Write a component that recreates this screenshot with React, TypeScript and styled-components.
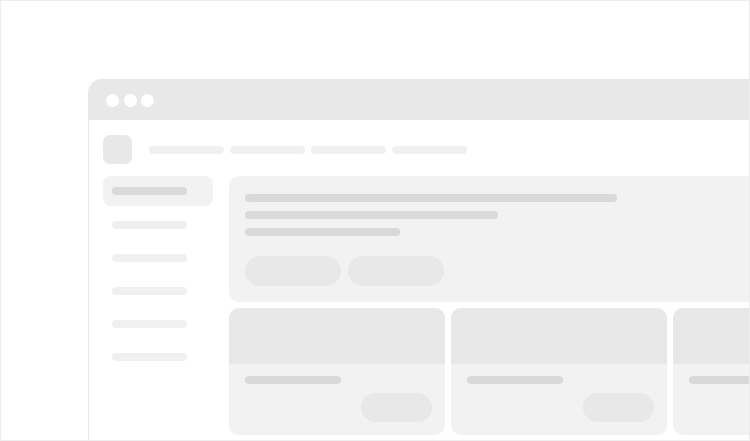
import React from "react";
import styled, { createGlobalStyle } from "styled-components";

const Global = createGlobalStyle`
  html, body { margin: 0; padding: 0; background: #ffffff; }
  body { font-family: "Liberation Sans", Arial, sans-serif; }
`;

const Frame = styled.div`
  box-sizing: border-box;
  width: 750px;
  height: 441px;
  border: 1px solid #ededed;
  overflow: hidden;
  padding: 78px 0 0 87px;
  background: #ffffff;
`;

const Window = styled.div`
  width: 820px;
  height: 400px;
  border: 1px solid #e6e6e6;
  border-right: none;
  border-bottom: none;
  border-radius: 14px 0 0 0;
  overflow: hidden;
  background: #ffffff;
  display: flex;
  flex-direction: column;
`;

const TitleBar = styled.div`
  height: 40px;
  background: #e8e8e8;
  display: flex;
  align-items: center;
  gap: 4.5px;
  padding: 1px 0 0 17px;
  box-sizing: border-box;
`;

const Dot = styled.span`
  width: 13px;
  height: 13px;
  border-radius: 50%;
  background: #ffffff;
`;

const Body = styled.div`
  padding: 15px 14px 0 14px;
  display: flex;
  flex-direction: column;
  gap: 12px;
`;

const Header = styled.div`
  display: flex;
  align-items: center;
  gap: 17px;
`;

const Logo = styled.div`
  width: 29px;
  height: 29px;
  border-radius: 7px;
  background: #e8e8e8;
`;

const Nav = styled.div`
  display: flex;
  gap: 6px;
`;

const Bar = styled.div<{ $w: number; $tone?: "light" | "dark" }>`
  width: ${(p) => p.$w}px;
  height: 8px;
  border-radius: 4px;
  background: ${(p) => (p.$tone === "dark" ? "#d9d9d9" : "#f0f0f0")};
  flex-shrink: 0;
`;

const Columns = styled.div`
  display: flex;
  gap: 16px;
  align-items: flex-start;
`;

const Sidebar = styled.div`
  width: 110px;
  display: flex;
  flex-direction: column;
  gap: 4px;
  flex-shrink: 0;
`;

const SideItem = styled.div<{ $active?: boolean }>`
  height: ${(p) => (p.$active ? 30 : 29)}px;
  border-radius: 8px;
  padding: 0 9px;
  display: flex;
  align-items: center;
  background: ${(p) => (p.$active ? "#f2f2f2" : "transparent")};
`;

const Main = styled.div`
  display: flex;
  flex-direction: column;
  gap: 6px;
  width: 700px;
  flex-shrink: 0;
`;

const Hero = styled.div`
  height: 126px;
  box-sizing: border-box;
  background: #f2f2f2;
  border-radius: 10px;
  padding: 18px 16px 16px 16px;
  display: flex;
  flex-direction: column;
`;

const Lines = styled.div`
  display: flex;
  flex-direction: column;
  gap: 9px;
`;

const Actions = styled.div`
  margin-top: 20px;
  display: flex;
  gap: 7px;
`;

const Pill = styled.div<{ $w: number; $h: number }>`
  width: ${(p) => p.$w}px;
  height: ${(p) => p.$h}px;
  border-radius: ${(p) => p.$h / 2}px;
  background: #e8e8e8;
  flex-shrink: 0;
`;

const Cards = styled.div`
  display: grid;
  grid-template-columns: repeat(3, 216px);
  gap: 6px;
`;

const Card = styled.div`
  height: 127px;
  border-radius: 10px;
  overflow: hidden;
  background: #f2f2f2;
  display: flex;
  flex-direction: column;
`;

const CardMedia = styled.div`
  height: 56px;
  background: #e8e8e8;
`;

const CardBody = styled.div`
  flex: 1;
  padding: 12px 13px 13px 16px;
  display: flex;
  flex-direction: column;
  justify-content: space-between;
`;

const CardFoot = styled.div`
  display: flex;
  justify-content: flex-end;
`;

export default function App() {
  return (
    <>
      <Global />
      <Frame>
        <Window>
          <TitleBar>
            <Dot />
            <Dot />
            <Dot />
          </TitleBar>
          <Body>
            <Header>
              <Logo />
              <Nav>
                {[0, 1, 2, 3].map((i) => (
                  <Bar key={i} $w={75} />
                ))}
              </Nav>
            </Header>
            <Columns>
              <Sidebar>
                <SideItem $active>
                  <Bar $w={75} $tone="dark" />
                </SideItem>
                {[0, 1, 2, 3, 4].map((i) => (
                  <SideItem key={i}>
                    <Bar $w={75} />
                  </SideItem>
                ))}
              </Sidebar>
              <Main>
                <Hero>
                  <Lines>
                    <Bar $w={372} $tone="dark" />
                    <Bar $w={253} $tone="dark" />
                    <Bar $w={155} $tone="dark" />
                  </Lines>
                  <Actions>
                    <Pill $w={96} $h={30} />
                    <Pill $w={96} $h={30} />
                  </Actions>
                </Hero>
                <Cards>
                  {[0, 1, 2].map((i) => (
                    <Card key={i}>
                      <CardMedia />
                      <CardBody>
                        <Bar $w={96} $tone="dark" />
                        <CardFoot>
                          <Pill $w={71} $h={29} />
                        </CardFoot>
                      </CardBody>
                    </Card>
                  ))}
                </Cards>
              </Main>
            </Columns>
          </Body>
        </Window>
      </Frame>
    </>
  );
}
